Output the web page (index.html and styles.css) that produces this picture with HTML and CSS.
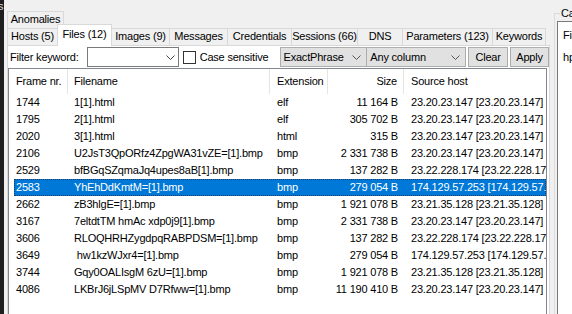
FILE: index.html
```html
<!DOCTYPE html>
<html lang="en">
<head>
    <meta charset="UTF-8">
    <title>Files</title>
    <link rel="stylesheet" href="styles.css">
</head>
<body>
    <div class="edge"><span>s</span></div>

    <div class="main">
        <div class="tab-row top-row">
            <div class="tab">Anomalies</div>
        </div>
        <div class="tab-row bottom-row">
            <div class="tab">Hosts (5)</div>
            <div class="tab active">Files (12)</div>
            <div class="tab">Images (9)</div>
            <div class="tab">Messages</div>
            <div class="tab">Credentials</div>
            <div class="tab">Sessions (66)</div>
            <div class="tab">DNS</div>
            <div class="tab">Parameters (123)</div>
            <div class="tab">Keywords</div>
        </div>

        <div class="panel">
            <div class="filter">
                <span class="filter-label">Filter keyword:</span>
                <div class="combo edit">
                    <span class="combo-text"></span>
                    <svg class="chev" width="9" height="5" viewBox="0 0 9 5"><path d="M0.5 0.5 L4.5 4.5 L8.5 0.5" fill="none" stroke="#444" stroke-width="1"/></svg>
                </div>
                <span class="check"></span>
                <span class="check-label">Case sensitive</span>
                <div class="combo list phrase">
                    <span class="combo-text">ExactPhrase</span>
                    <svg class="chev" width="9" height="5" viewBox="0 0 9 5"><path d="M0.5 0.5 L4.5 4.5 L8.5 0.5" fill="none" stroke="#555" stroke-width="1"/></svg>
                </div>
                <div class="combo list column">
                    <span class="combo-text">Any column</span>
                    <svg class="chev" width="9" height="5" viewBox="0 0 9 5"><path d="M0.5 0.5 L4.5 4.5 L8.5 0.5" fill="none" stroke="#555" stroke-width="1"/></svg>
                </div>
                <button class="btn clear">Clear</button>
                <button class="btn apply">Apply</button>
            </div>

            <div class="listview">
                <div class="lv-header">
                    <div class="hcell c1">Frame nr.</div>
                    <div class="hcell c2">Filename</div>
                    <div class="hcell c3">Extension</div>
                    <div class="hcell c4">Size</div>
                    <div class="hcell c5">Source host</div>
                </div>
                <div class="lv-body">
                    <div class="row"><span>1744</span><span>1[1].html</span><span>elf</span><span class="num">11 164 B</span><span>23.20.23.147 [23.20.23.147]</span></div>
                    <div class="row"><span>1795</span><span>2[1].html</span><span>elf</span><span class="num">305 702 B</span><span>23.20.23.147 [23.20.23.147]</span></div>
                    <div class="row"><span>2020</span><span>3[1].html</span><span>html</span><span class="num">315 B</span><span>23.20.23.147 [23.20.23.147]</span></div>
                    <div class="row"><span>2106</span><span>U2JsT3QpORfz4ZpgWA31vZE=[1].bmp</span><span>bmp</span><span class="num">2 331 738 B</span><span>23.20.23.147 [23.20.23.147]</span></div>
                    <div class="row"><span>2529</span><span>bfBGqSZqmaJq4upes8aB[1].bmp</span><span>bmp</span><span class="num">137 282 B</span><span>23.22.228.174 [23.22.228.174]</span></div>
                    <div class="row selected"><span>2583</span><span>YhEhDdKmtM=[1].bmp</span><span>bmp</span><span class="num">279 054 B</span><span>174.129.57.253 [174.129.57.253]</span></div>
                    <div class="row"><span>2662</span><span>zB3hlgE=[1].bmp</span><span>bmp</span><span class="num">1 921 078 B</span><span>23.21.35.128 [23.21.35.128]</span></div>
                    <div class="row"><span>3167</span><span>7eltdtTM hmAc xdp0j9[1].bmp</span><span>bmp</span><span class="num">2 331 738 B</span><span>23.20.23.147 [23.20.23.147]</span></div>
                    <div class="row"><span>3606</span><span>RLOQHRHZygdpqRABPDSM=[1].bmp</span><span>bmp</span><span class="num">137 282 B</span><span>23.22.228.174 [23.22.228.174]</span></div>
                    <div class="row"><span>3649</span><span>&nbsp;hw1kzWJxr4=[1].bmp</span><span>bmp</span><span class="num">279 054 B</span><span>174.129.57.253 [174.129.57.253]</span></div>
                    <div class="row"><span>3744</span><span>Gqy0OALIsgM 6zU=[1].bmp</span><span>bmp</span><span class="num">1 921 078 B</span><span>23.21.35.128 [23.21.35.128]</span></div>
                    <div class="row"><span>4086</span><span>LKBrJ6jLSpMV D7Rfww=[1].bmp</span><span>bmp</span><span class="num">11 190 410 B</span><span>23.20.23.147 [23.20.23.147]</span></div>
                </div>
            </div>
        </div>
    </div>

    <div class="side">
        <fieldset class="group">
            <legend>Carved</legend>
            <div class="details">
                <div class="line">File</div>
                <div class="line">hp</div>
            </div>
        </fieldset>
    </div>
</body>
</html>
```

FILE: styles.css
```css
* {
    box-sizing: border-box;
}

body {
    margin: 0;
    height: 314px;
    overflow: hidden;
    display: flex;
    background-color: #f0f0f0;
    color: #000;
    font-family: "Liberation Sans", Arial, sans-serif;
    font-size: 11px;
    letter-spacing: -0.2px;
}

.edge {
    width: 4px;
    flex-shrink: 0;
    background-color: #1e1e1e;
    color: #d8d8d8;
    overflow: hidden;
    line-height: 12px;
}

.edge span {
    display: block;
    margin-left: -2px;
}

.main {
    width: 546px;
    flex-shrink: 0;
    padding: 11px 0 0 3px;
    display: flex;
    flex-direction: column;
}

/* tabs */

.tab-row {
    display: flex;
    height: 17px;
}

.tab {
    height: 17px;
    border: 1px solid #d9d9d9;
    border-bottom: none;
    background-color: #f0f0f0;
    text-align: center;
    line-height: 15px;
    white-space: nowrap;
    margin-left: -1px;
}

.top-row .tab {
    width: 57px;
    margin-left: 0;
}

.bottom-row .tab:first-child {
    margin-left: 0;
}

.bottom-row .tab:nth-child(1) { width: 51px; }
.bottom-row .tab:nth-child(2) { width: 55px; }
.bottom-row .tab:nth-child(3) { width: 59px; }
.bottom-row .tab:nth-child(4) { width: 59px; }
.bottom-row .tab:nth-child(5) { width: 65px; }
.bottom-row .tab:nth-child(6) { width: 67px; }
.bottom-row .tab:nth-child(7) { width: 46px; }
.bottom-row .tab:nth-child(8) { width: 91px; }
.bottom-row .tab:nth-child(9) { width: 54px; }

.tab.active {
    height: 22px;
    margin-top: -4px;
    margin-bottom: -1px;
    background-color: #fff;
    line-height: 18px;
    position: relative;
    z-index: 1;
}

/* tab page */

.panel {
    flex-grow: 1;
    width: 543px;
    border: 1px solid #d9d9d9;
    border-bottom: none;
    background-color: #fff;
    display: flex;
    flex-direction: column;
}

.filter {
    display: flex;
    align-items: center;
    height: 22px;
    padding-left: 2px;
}

.filter-label {
    width: 77px;
}

.combo {
    height: 20px;
    display: flex;
    align-items: center;
    justify-content: space-between;
    padding: 0 5px 0 3px;
    white-space: nowrap;
}

.combo.edit {
    width: 92px;
    background-color: #fff;
    border: 1px solid #7a7a7a;
    padding-right: 3px;
}

.combo.list {
    background-color: #e1e1e1;
    border: 1px solid #adadad;
}

.phrase {
    width: 88px;
}

.column {
    width: 100px;
    margin-left: -1px;
}

.check {
    width: 13px;
    height: 13px;
    margin-left: 4px;
    border: 1px solid #333;
    background-color: #fff;
}

.check-label {
    width: 84px;
    padding-left: 4px;
}

.btn {
    height: 20px;
    margin-left: 2px;
    padding: 0;
    background-color: #e1e1e1;
    border: 1px solid #adadad;
    font-family: inherit;
    font-size: 11px;
    letter-spacing: inherit;
    color: #000;
}

.clear {
    width: 40px;
}

.apply {
    width: 39px;
}

/* list */

.listview {
    flex-grow: 1;
    width: 539px;
    border: 1px solid #828790;
    border-bottom: none;
    background-color: #fff;
    overflow: hidden;
}

.lv-header {
    display: grid;
    grid-template-columns: 59px 202px 58px 76px 1fr;
    height: 25px;
    line-height: 24px;
}

.hcell {
    border-right: 1px solid #e5e5e5;
    padding-left: 7px;
    white-space: nowrap;
    overflow: hidden;
}

.hcell.c2 {
    padding-left: 6px;
}

.hcell.c4 {
    text-align: right;
    padding-right: 6px;
}

.hcell.c5 {
    border-right: none;
}

.row {
    display: grid;
    grid-template-columns: 54px 202px 58px 76px 1fr;
    height: 17px;
    line-height: 17px;
    margin-left: 5px;
    white-space: nowrap;
}

.row span {
    overflow: hidden;
    padding-left: 7px;
}

.row span:first-child {
    padding-left: 2px;
}

.row span:nth-child(2) {
    padding-left: 6px;
}

.row .num {
    text-align: right;
    padding-right: 6px;
}

.row.selected {
    background-color: #0078d7;
    color: #fff;
    outline: 1px dotted #1c3d66;
    outline-offset: -1px;
}

/* right side */

.side {
    flex-grow: 1;
    padding: 7px 0 0 4px;
    overflow: hidden;
}

.group {
    margin: 0;
    padding: 1px 0 0 2px;
    height: 320px;
    border: 1px solid #dcdcdc;
    border-right: none;
    border-bottom: none;
    min-width: 0;
}

.group legend {
    padding: 0 1px;
    margin-left: 3px;
    line-height: 13px;
    white-space: nowrap;
}

.details {
    height: 300px;
    background-color: #fff;
    border: 1px solid #7a7a7a;
    border-right: none;
    padding: 2px 0 0 5px;
    white-space: nowrap;
}

.line {
    line-height: 22px;
}
```
